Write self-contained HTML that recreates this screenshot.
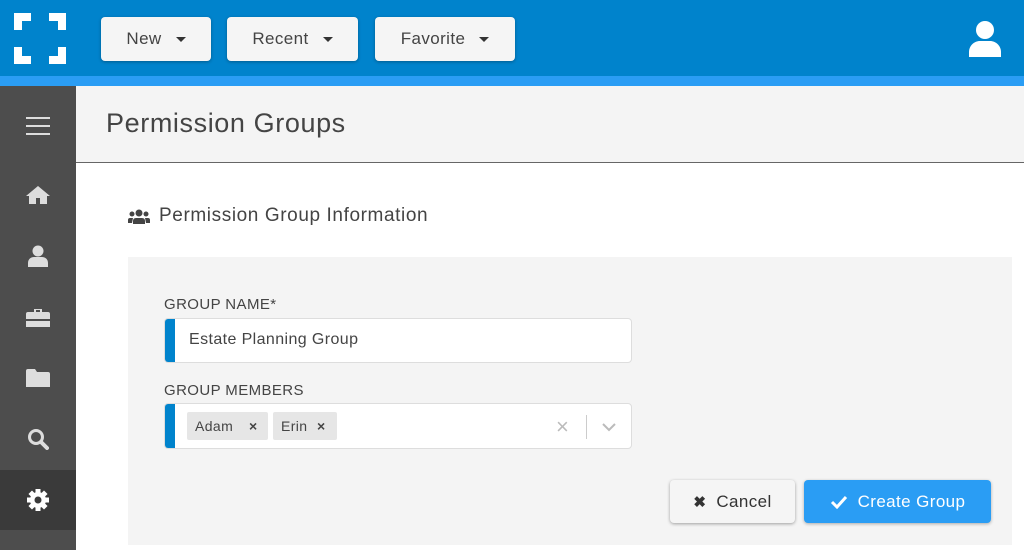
<!DOCTYPE html>
<html><head><style>
*{margin:0;padding:0;box-sizing:border-box}
body{width:1024px;height:556px;overflow:hidden;background:#fff;font-family:"Liberation Sans",sans-serif;position:relative;color:#444;letter-spacing:.4px}
.abs{position:absolute}
.top{left:0;top:0;width:1024px;height:76px;background:#0083cc}
.strip{left:0;top:76px;width:1024px;height:10px;background:#2a9df4}
.btn{top:17px;height:44px;background:#f5f5f5;border-radius:4px;box-shadow:0 1px 3px rgba(0,0,0,.3);font-size:17px;color:#444;display:flex;align-items:center;justify-content:center;gap:14px}
.caret{width:0;height:0;border-left:5px solid transparent;border-right:5px solid transparent;border-top:5px solid #333}
.side{left:0;top:86px;width:76px;height:464px;background:#4d4d4d}
.hdr{left:76px;top:86px;width:948px;height:77px;background:#f4f4f4;border-bottom:1px solid #666}
.panel{left:128px;top:257px;width:884px;height:288px;background:#f4f4f4}
.inp{left:164px;width:468px;background:#fff;border:1px solid #ddd;border-radius:4px;overflow:hidden}
.inp:before{content:"";position:absolute;left:0;top:0;bottom:0;width:10px;background:#0083cc}
.lbl{left:164px;font-size:15px;color:#444}
.tag{top:8px;height:28px;background:#e6e6e6;border-radius:2px;font-size:14px;color:#444;display:flex;align-items:center;padding-left:8px}
</style></head><body>
<div class="abs top"></div>
<div class="abs strip"></div>
<svg class="abs" style="left:14px;top:13px" width="52" height="51"><g fill="#fff"><path d="M0 0H17V8H8V17H0Z"/><path d="M52 0H35V8H44V17H52Z"/><path d="M0 51H17V43H8V34H0Z"/><path d="M52 51H35V43H44V34H52Z"/></g></svg>
<div class="abs btn" style="left:101px;width:110px">New<span class="caret"></span></div>
<div class="abs btn" style="left:227px;width:131px">Recent<span class="caret"></span></div>
<div class="abs btn" style="left:375px;width:140px">Favorite<span class="caret"></span></div>
<svg class="abs" style="left:969px;top:21px" width="32" height="36"><circle cx="16" cy="9" r="9" fill="#fff"/><path d="M0 36V31C0 25 5 20 11 20H21C27 20 32 25 32 31V36Z" fill="#fff"/></svg>
<div class="abs side"></div>
<div class="abs" style="left:0;top:470px;width:76px;height:60px;background:#3a3a3a"></div>
<svg class="abs" style="left:26px;top:116px" width="24" height="20"><g fill="#ddd"><rect y="1" width="24" height="2"/><rect y="9" width="24" height="2"/><rect y="17" width="24" height="2"/></g></svg>
<svg class="abs" style="left:26px;top:185px" width="24" height="20"><path d="M12 1L0 11H3V19H10V13H14V19H21V11H24Z" fill="#ddd"/></svg>
<svg class="abs" style="left:28px;top:245px" width="20" height="22"><circle cx="10" cy="6" r="5.5" fill="#ddd"/><path d="M0 22V18C0 14 3 12 6 12H14C17 12 20 14 20 18V22Z" fill="#ddd"/></svg>
<svg class="abs" style="left:26px;top:308px" width="24" height="20"><path d="M8 4V1H16V4H22Q24 4 24 6V19H0V6Q0 4 2 4ZM10 2V4H14V2Z" fill="#ddd" fill-rule="evenodd"/><rect x="0" y="11" width="24" height="2" fill="#4d4d4d"/></svg>
<svg class="abs" style="left:26px;top:369px" width="24" height="18"><path d="M0 2Q0 0 2 0H9L11 3H22Q24 3 24 5V18H0Z" fill="#ddd"/></svg>
<svg class="abs" style="left:27px;top:428px" width="22" height="22"><circle cx="9" cy="9" r="6.5" fill="none" stroke="#ddd" stroke-width="3"/><path d="M14 14L20 20" stroke="#ddd" stroke-width="4" stroke-linecap="round"/></svg>
<svg class="abs" style="left:27px;top:489px" width="22" height="22" viewBox="-11 -11 22 22"><g fill="#fff"><circle r="8"/><g id="t"><rect x="-2.5" y="-11" width="5" height="5"/></g><use href="#t" transform="rotate(45)"/><use href="#t" transform="rotate(90)"/><use href="#t" transform="rotate(135)"/><use href="#t" transform="rotate(180)"/><use href="#t" transform="rotate(225)"/><use href="#t" transform="rotate(270)"/><use href="#t" transform="rotate(315)"/></g><circle r="3.5" fill="#3a3a3a"/></svg>
<div class="abs hdr"></div>
<div class="abs" style="left:106px;top:108px;font-size:27px;color:#444;letter-spacing:.6px">Permission Groups</div>
<svg class="abs" style="left:128px;top:209px" width="22" height="15"><g fill="#444"><circle cx="11" cy="4" r="3.5"/><circle cx="4" cy="5" r="2.5"/><circle cx="18" cy="5" r="2.5"/><path d="M5 15V12Q5 9 8 9H14Q17 9 17 12V15Z"/><path d="M0 14V11Q0 9 2 9H5L4 14Z"/><path d="M22 14V11Q22 9 20 9H17L18 14Z"/></g></svg>
<div class="abs" style="left:159px;top:205px;font-size:19px;color:#444;letter-spacing:.6px">Permission Group Information</div>
<div class="abs panel"></div>
<div class="abs lbl" style="top:296px">GROUP NAME*</div>
<div class="abs inp" style="top:318px;height:45px"><span class="abs" style="left:24px;top:12px;font-size:16px;color:#444">Estate Planning Group</span></div>
<div class="abs lbl" style="top:382px">GROUP MEMBERS</div>
<div class="abs inp" style="top:403px;height:46px">
<div class="abs tag" style="left:22px;width:81px">Adam<span style="position:absolute;left:62px;font-weight:bold;font-size:14px">×</span></div>
<div class="abs tag" style="left:108px;width:64px">Erin<span style="position:absolute;left:44px;font-weight:bold;font-size:14px">×</span></div>
<span class="abs" style="left:391px;top:10px;font-size:22px;color:#bbb">×</span>
<div class="abs" style="left:421px;top:11px;width:1px;height:24px;background:#ccc"></div>
<svg class="abs" style="left:437px;top:18px" width="14" height="10"><path d="M1 2L7 8L13 2" fill="none" stroke="#bbb" stroke-width="2"/></svg>
</div>
<div class="abs" style="left:670px;top:480px;width:125px;height:43px;background:#f5f5f5;border-radius:4px;box-shadow:0 1px 3px rgba(0,0,0,.35);display:flex;align-items:center;justify-content:center;gap:10px;font-size:17px;color:#333"><b style="font-size:15px">✖</b>Cancel</div>
<div class="abs" style="left:804px;top:480px;width:187px;height:43px;background:#2a9df4;border-radius:4px;box-shadow:0 1px 3px rgba(0,0,0,.3);display:flex;align-items:center;justify-content:center;gap:10px;font-size:17px;color:#fff"><svg width="18" height="14"><path d="M2 7L7 12L16 2" fill="none" stroke="#fff" stroke-width="3"/></svg>Create Group</div>
</body></html>
